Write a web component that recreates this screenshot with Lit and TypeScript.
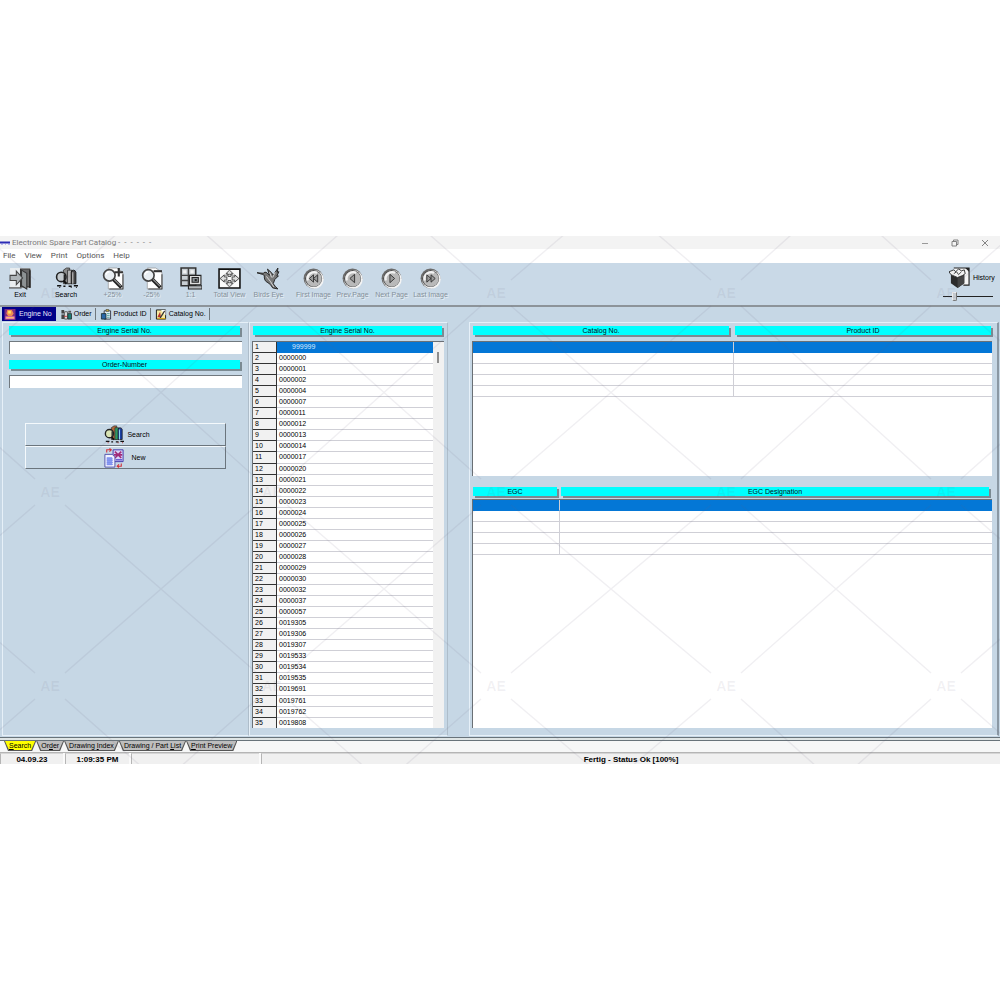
import { LitElement, html, svg, css, TemplateResult } from "lit";
import { customElement, state } from "lit/decorators.js";
import { classMap } from "lit/directives/class-map.js";

const icon = (box: string, cls: string, body: TemplateResult) =>
  html`<svg class=${cls} viewBox=${box} aria-hidden="true">${body}</svg>`;

const magnifier = svg`
  <circle cx="8" cy="8" r="5.5" fill="#e9eef2" stroke="#444" stroke-width="1.6"/>
  <path d="M5 7.5a3 3 0 0 1 3-3" fill="none" stroke="#fff" stroke-width="1.4"/>
  <path d="M12 12l7.5 7.5" stroke="#222" stroke-width="3.4"/>
  <path d="M12.5 11.8l6.5 6.4" stroke="#999" stroke-width="1"/>`;

const exitIcon = svg`
  <rect x="1" y="1" width="20" height="19" fill="#e9edf0"/>
  <path d="M11 2h9v17h-9z" fill="#666" stroke="#333"/>
  <path d="M12 3l5 3v15l-5-3z" fill="#8d9294" stroke="#333"/>
  <path d="M1 8h6V4l6 6.5L7 17v-4H1z" fill="#aeb4b8" stroke="#444"/>
  <path d="M0 20h12" stroke="#555" stroke-width="1.2"/>
  <path d="M20 3v17" stroke="#222" stroke-width="1.4"/>`;

const booksIcon = (color: boolean) => svg`
  <path d="M8 3l3-2h3v15H8z" fill=${color ? "#b0673a" : "#8b8b8b"} stroke="#333" stroke-width=".8"/>
  <path d="M12 3h4v13h-4z" fill=${color ? "#2f9a62" : "#b5b5b5"} stroke="#333" stroke-width=".8"/>
  <path d="M15.500 5q0-2 2-2t2.500 2v11h-4.500z" fill=${color ? "#1a3fa4" : "#444"} stroke="#111" stroke-width=".8"/>
  <path d="M17 5v11" stroke=${color ? "#8ed8f0" : "#bbb"} stroke-width="1.2"/>
  <circle cx="6" cy="9.500" r="4.500" fill=${color ? "#d9e4b4" : "#c3c9cd"} stroke="#222" stroke-width="1.5"/>
  <path d="M9 7v6" stroke="#222" stroke-width="1.500"/>
  <path d="M8 13l3 3" stroke="#111" stroke-width="2"/>
  <path d="M2 18h4M8 18.500h2M13 18.500h3M18 18h4" stroke="#111" stroke-width="1.400"/>
  <path d="M4 19.500h1M15 19.500h1M20 19.500h1" stroke=${color ? "#b02020" : "#333"} stroke-width="1.200"/>`;

const zoomIcon = (plus: boolean) => svg`
  <path d="M7 1h8l6 4v16H7z" fill="#fff" stroke="#888" stroke-width=".6"/>
  <path d="M21 7v14H8" fill="none" stroke="#444" stroke-width="1"/>
  ${magnifier}
  <path d=${plus ? "M13 5h8M17 1v8" : "M13 4h8"} stroke="#333" stroke-width="2"/>`;

const ratioIcon = svg`
  <path d="M2 1h14v17H2z" fill="#c9cfd3" stroke="#333" stroke-width="1.5"/>
  <path d="M9 1v17M2 8h14M2 13h14" stroke="#444" stroke-width="1.4"/>
  <path d="M4 3h3v3H4zM11 3h3v3h-3z" fill="#f2f2f2"/>
  <path d="M10 8h11v9H10z" fill="#ddd" stroke="#222"/>
  <path d="M12.500 10h6v4.500h-6z" fill="#8c9296" stroke="#222"/>
  <path d="M15 11.500h2v2h-2z" fill="#222"/>
  <path d="M9 18h13v3H9z" fill="#b5b9bc" stroke="#222"/>`;

const totalIcon = svg`
  <path d="M1 2h20v18H1z" fill="#fafafa" stroke="#111" stroke-width="1.5"/>
  <path d="M11 3l3.500 3.500h-2V9h-3V6.500h-2zM11 19l-3.500-3.500h2V13h3v2.500h2zM2 11l4-3.500v2h2.500v3H6v2zM20 11l-4-3.500v2h-2.500v3H16v2z" fill="#ddd" stroke="#444" stroke-width=".9"/>
  <path d="M7 8q4-2 8 0M7 14q4 2 8 0" fill="none" stroke="#555" stroke-width=".9"/>`;

const birdIcon = svg`
  <path d="M0 5.500L6 6q1.500-2 3.500-.500L12 8l-2-6 4 3.500L15.500 8 20 1l-.500 4 1.500-.500-2 4h1.500L17 12l-1.500 4 2 2.500L20 21l-5-1-2-3-2.500-2Q6.500 13.500 7 8L5 7z" fill="#777" stroke="#222" stroke-width=".9"/>
  <path d="M12 5l2 5M17.500 5L15 10M9 9l4 5M13 14l3 5" stroke="#ddd" stroke-width=".9"/>`;

const ball = (glyph: TemplateResult) => svg`
  <circle cx="11" cy="11" r="9.500" fill="#6c6c6c"/>
  <circle cx="11.800" cy="11.800" r="9" fill="#f4f4f4"/>
  <circle cx="11" cy="11" r="8.200" fill="#4c4c4c"/>
  <circle cx="11.300" cy="11.300" r="7.500" fill="#b9b9b9"/>
  <path d="M5.500 13a6.500 6.500 0 0 1 9-7.500" fill="none" stroke="#f2f2f2" stroke-width="2.200"/>
  <g fill="#9b9b9b" stroke="#333" stroke-width=".9">${glyph}</g>`;

const engineIcon = svg`
  <path d="M0 0h12v12H0z" fill="#7b2d82"/>
  <path d="M3 1h5l2 4-2 3H4L2 5z" fill="#f08c50"/>
  <path d="M4 2h3v3H4z" fill="#ffe15a"/>
  <path d="M1 8h10v3H1z" fill="#e87ab0"/><path d="M2 9.500h8" stroke="#ffd84a"/>`;
const orderIcon = svg`
  <path d="M1 1h3v4H1zM1 6h3v5H1z" fill="#444"/>
  <path d="M4.500 3h3v8h-3z" fill="#eee" stroke="#333" stroke-width=".8"/>
  <path d="M8 5h4v6H8z" fill="#1c7c74" stroke="#222" stroke-width=".8"/>
  <path d="M8.500 2h3v2h-3z" fill="#555"/><path d="M4 8h3" stroke="#c33"/>`;
const productIcon = svg`
  <path d="M4 2h7v9H4z" fill="#e3eef2" stroke="#223" stroke-width=".9"/>
  <path d="M6 .500h3v2H6z" fill="#d8b640" stroke="#333" stroke-width=".6"/>
  <path d="M1 5h5v6H1z" fill="#2a67a8" stroke="#122" stroke-width=".8"/>
  <path d="M7 5h3M7 7h3M7 9h3" stroke="#2c8a8a" stroke-width=".8"/>`;
const catalogIcon = svg`
  <path d="M1 1h10v10H1z" fill="#f6e9a2" stroke="#111" stroke-width="1"/>
  <path d="M6 1h5v6z" fill="#fff"/><path d="M2 9l3-6 1 6" fill="#b8352c"/>
  <path d="M10 2L5 10" stroke="#333" stroke-width="1.300"/><path d="M2 10.500h9" stroke="#d6a51d" stroke-width="1.200"/>`;

const newIcon = svg`
  <path d="M10 2h11v13H10z" fill="#d9d4f8" stroke="#3a2fa8"/>
  <path d="M12 4l7 7M19 4l-7 7M11 7.500h9" stroke="#a02a78" stroke-width="1.800"/>
  <path d="M13 13h7" stroke="#5b4fd0" stroke-width="1.500"/>
  <path d="M1 7h8l3 3v11H1z" fill="#f4f5ff" stroke="#4a4aa6"/>
  <path d="M3 10h6v9H3z" fill="#8fa0f4"/><path d="M3 12h7M3 14h7M3 16h7M3 18h7" stroke="#7585ea" stroke-width=".8"/>
  <path d="M3 5V2h4M6 .500L8 2 6 4M19 17v3h-4M16.500 18l-2 2 2 1.500" fill="none" stroke="#d2333b" stroke-width="1.200"/>`;

const historyIcon = svg`
  <path d="M5 1h16v18h-6" fill="#f6f6f6" stroke="#222" stroke-width="1.200"/>
  <path d="M17 1h4v4z" fill="#222"/>
  <path d="M2 8l7 3 7-3v9l-7 5-7-5z" fill="#2c2c2c"/>
  <path d="M9 11v11l7-5V8z" fill="#444"/>
  <path d="M2 8L0 5l5-2 2 2 3-3 3 2 3-1 1 4-3 2-5 2z" fill="#f2f2f2" stroke="#222" stroke-width=".9"/>
  <path d="M5 7l3-2 2 3 3-3" fill="none" stroke="#444"/>`;

interface Tool { label: string; art: TemplateResult; off: boolean; cls: string }
const TOOLS: Tool[] = [
  { label: "Exit", art: exitIcon, off: false, cls: "exit" },
  { label: "Search", art: booksIcon(false), off: false, cls: "find" },
  { label: "+25%", art: zoomIcon(true), off: true, cls: "" },
  { label: "-25%", art: zoomIcon(false), off: true, cls: "" },
  { label: "1:1", art: ratioIcon, off: true, cls: "" },
  { label: "Total View", art: totalIcon, off: true, cls: "" },
  { label: "Birds Eye", art: birdIcon, off: true, cls: "" },
  { label: "First Image", art: ball(svg`<path d="M11 7.500v7L7 11zM15 7.500v7L11 11z"/>`), off: true, cls: "nav" },
  { label: "Prev.Page", art: ball(svg`<path d="M13 7v8l-4.500-4z"/>`), off: true, cls: "" },
  { label: "Next Page", art: ball(svg`<path d="M9.500 7v8l4.500-4z"/>`), off: true, cls: "" },
  { label: "Last Image", art: ball(svg`<path d="M7.500 7.500v7l4-3.500zM11.500 7.500v7l4-3.500z"/>`), off: true, cls: "" },
];

const SERIALS = (
  "999999 0000000 0000001 0000002 0000004 0000007 0000011 0000012 0000013 0000014 0000017 0000020 " +
  "0000021 0000022 0000023 0000024 0000025 0000026 0000027 0000028 0000029 0000030 0000032 0000037 " +
  "0000057 0019305 0019306 0019307 0019533 0019534 0019535 0019691 0019761 0019762 0019808"
).split(" ");

const VIEWS = [
  { label: "Engine No", art: engineIcon },
  { label: "Order", art: orderIcon },
  { label: "Product ID", art: productIcon },
  { label: "Catalog No.", art: catalogIcon },
];

const SHEETS: [string, string, string][] = [
  ["", "S", "earch"],
  ["Or", "d", "er"],
  ["Drawing ", "I", "ndex"],
  ["Drawing / Part ", "L", "ist"],
  ["", "P", "rint Preview"],
];

const MARK_X = [50, 272, 496, 726, 946];
const MARK_Y = [57, 256, 450];

@customElement("app-root")
export class AppRoot extends LitElement {
  @state() private view = 0;
  @state() private sheet = 0;
  @state() private row = 0;

  static styles = css`
    :host {
      display: flex;
      flex-direction: column;
      justify-content: center;
      min-height: 100vh;
      background: #fff;
      color: #000;
      font: 7px/10px "Liberation Sans", sans-serif;
    }
    * { box-sizing: border-box; }
    button, input { font: inherit; color: inherit; margin: 0; padding: 0; border: 0; background: none; border-radius: 0; }
    svg { display: block; flex: none; }
    .window { position: relative; overflow: hidden; background: #c6d7e5; }
    .title {
      display: flex; align-items: center; height: 13px; background: #f3f3f3;
      font: 8px/10px Roboto, sans-serif; color: #7c7c7c;
    }
    .logo { width: 12px; height: 6px; }
    .name { flex: 1; }
    .win { width: 30px; height: 13px; display: grid; place-items: center; }
    .win svg { width: 8px; height: 8px; }
    .menu {
      display: flex; align-items: center; gap: 9px; height: 14px; padding-left: 3px; background: #fff;
      font: 8px/10px Roboto, sans-serif; color: #555;
    }
    .toolbar {
      display: flex; align-items: flex-start; height: 44px; padding-top: 4px;
      border-bottom: 2px solid #8d949a; background: #c9d9e7;
    }
    .tool { width: 39px; display: flex; flex-direction: column; align-items: center; white-space: nowrap; }
    .tool svg { width: 23px; height: 23px; }
    .tool:disabled { color: #84909a; text-shadow: 1px 1px 0 #e6eef4; }
    .exit { width: 40px; }
    .find { width: 46px; margin: 0 4px 0 3px; }
    .nav { margin-left: 6px; }
    .history { margin-left: auto; width: 58px; }
    .history label { display: flex; align-items: center; gap: 3px; padding-left: 7px; }
    .history svg { width: 21px; height: 21px; }
    .slider { appearance: none; display: block; width: 50px; height: 12px; margin: 2px 0 0 1px; }
    .slider::-webkit-slider-runnable-track { height: 1px; background: #222; }
    .slider::-webkit-slider-thumb {
      appearance: none; width: 5px; height: 9px; margin-top: -4px; background: #c8ccd0;
      border: 1px solid #777; border-top-color: #eee; border-left-color: #eee; border-radius: 0 0 2px 2px;
    }
    .views { display: flex; height: 14px; padding-left: 2px; }
    .view {
      display: flex; align-items: center; gap: 2px; padding: 0 3px 0 2px; white-space: nowrap;
      border-right: 1px solid #6f777d; margin: 1px 2px 1px 0;
    }
    .view svg { width: 12px; height: 11px; }
    .view.on { background: #000088; color: #e8e8ff; border-color: #000088; margin: 0 2px 0 0; gap: 3px; }
    .work { display: grid; grid-template-columns: 247px 199px minmax(0, 1fr); padding: 1px 1px 1px 2px; }
    .panel {
      display: flex; flex-direction: column; padding: 3px 6px 7px; border: 1px solid #e6f0f8;
      border-right-color: #aebdca;
    }
    .bar {
      height: 9px; line-height: 10px; text-align: center; background: #00ffff; color: #012;
      box-shadow: 2px 2px 0 #7b8a92; margin-bottom: 6px;
    }
    .field { display: block; margin-bottom: 6px; }
    .field .bar { display: block; margin-right: 2px; }
    .field input {
      display: block; width: 100%; height: 13px; background: #fff; padding: 0 2px;
      border-top: 1px solid #71797f; border-left: 1px solid #71797f;
    }
    .actions { display: flex; flex-direction: column; margin: 29px 16px 0; }
    .act {
      display: flex; justify-content: center; align-items: center; gap: 2px; height: 23px; padding-left: 2px;
      border: 1px solid; border-color: #f4f9fc #6b757d #6b757d #f4f9fc;
    }
    .act svg { width: 22px; height: 20px; }
    .act span { width: 24px; text-align: center; }
    .listing { padding: 3px 3px 7px 2px; }
    .listing .bar { margin: 0 2px 6px 1px; }
    .list { display: flex; height: 387px; overflow: hidden; border-top: 1px solid #6a7075; border-left: 1px solid #6a7075; background: #fff; }
    .scroll { flex: none; width: 11px; background: #f1f1f1; padding: 10px 0 0 4px; }
    .thumb { width: 2px; height: 11px; background: #8d8d8d; }
    table { border-collapse: separate; border-spacing: 0; table-layout: fixed; width: 100%; }
    td, th { padding: 0; height: 11px; line-height: 10px; font-weight: normal; text-align: left; overflow: hidden; white-space: nowrap; }
    td { border-bottom: 1px solid #cfcfd6; }
    .serials { flex: 1; height: 387px; }
    .serials th { width: 24px; padding-left: 2px; background: #f1f1f1; border-bottom: 1px solid #333; border-right: 1px solid #333; }
    .serials td { padding-left: 2px; }
    .serials .first td { padding-left: 15px; }
    .sel td { background: #0477d6; border-bottom-color: #0477d6; color: #d8ecff; }
    .results { margin-left: 21px; padding: 3px 5px 7px 2px; border-right: 2px solid #8a98a4; }
    .heads { display: grid; gap: 6px; padding: 0 1px; }
    .wide { grid-template-columns: 1fr 1fr; }
    .egc { grid-template-columns: 84px 1fr; gap: 4px; padding-right: 3px; }
    .egc .bar { margin-bottom: 3px; }
    .box { min-height: 135px; background: #fff; border-top: 1px solid #6a7075; border-left: 1px solid #6a7075; }
    .box td + td { border-left: 1px solid #cfcfd6; }
    .box .narrow { width: 86px; }
    .lower { flex: 1; }
    .egc { margin-top: 11px; }
    .foot { height: 4px; background: #dfe5e5; border-top: 1px solid #68737a; border-bottom: 1px solid #68737a; }
    .sheets { display: flex; height: 12px; padding-left: 4px; background: #f6f7f7; border-bottom: 1px solid #b5b5b5; }
    .sheet {
      position: relative; height: 10px; line-height: 10px; padding: 0 5px; white-space: nowrap;
      background: #555; clip-path: polygon(0 0, 100% 0, calc(100% - 4px) 100%, 4px 100%);
    }
    .sheet::before {
      content: ""; position: absolute; inset: 0 1px 1px;
      background: #bdbdbd; clip-path: polygon(0 0, 100% 0, calc(100% - 4px) 100%, 4px 100%);
    }
    .sheet.on::before { background: #ffff00; }
    .sheet span { position: relative; }
    .status {
      display: grid; grid-template-columns: 63px 64px 128px 1fr; gap: 2px; height: 11px; overflow: hidden;
      background: #fafafa; font: bold 8px/12px "Liberation Sans", sans-serif; text-align: center;
    }
    .status span { background: #f0f0f0; border-left: 1px solid #b5b5b5; border-top: 1px solid #d5d5d5; height: 11px; line-height: 11px; }
    .marks { position: absolute; inset: 0; width: 100%; height: 100%; pointer-events: none; }
  `;

  private marks() {
    const lines: TemplateResult[] = [];
    const xs = [-174, ...MARK_X, 1170];
    const ys = [-140, ...MARK_Y, 646];
    for (let j = 0; j < ys.length - 1; j++) {
      for (let i = 0; i < xs.length - 1; i++) {
        const [l, r, t, b] = [xs[i] + 15, xs[i + 1] - 15, ys[j] + 13, ys[j + 1] - 13];
        lines.push(svg`<path d="M${l} ${t}L${r} ${b}M${r} ${t}L${l} ${b}"/>`);
      }
    }
    return html`<svg class="marks" viewBox="0 0 1000 528" preserveAspectRatio="none" aria-hidden="true">
      <g fill="none" stroke="#6e6482" stroke-opacity=".1" stroke-width="1.400">${lines}</g>
      <g fill="#6e6482" fill-opacity=".09" font-family="Liberation Sans" font-weight="bold" font-size="14" text-anchor="middle">
        ${MARK_Y.map((y, j) =>
          MARK_X.filter((_, i) => j > 0 || i !== 1).map((x) => svg`<text x=${x} y=${y + 5}>AE</text>`)
        )}
      </g>
    </svg>`;
  }

  private grid(label: string, first: string) {
    return html`<table aria-label=${label}>
      <tbody>
        ${[0, 1, 2, 3, 4].map((n) => html`<tr class=${n ? "" : "sel"}><td class=${first}></td><td></td></tr>`)}
      </tbody>
    </table>`;
  }

  render() {
    return html`
      <main class="window">
        <header class="title">
          ${icon("0 0 12 6", "logo", svg`<path d="M0 2.500h10" stroke="#2b2bb4" stroke-width="2"/><path d="M1 4h2M5 4h1M8 4h2" stroke="#7d7de0"/>`)}
          <span class="name">Electronic Spare Part Catalog - &nbsp;- &nbsp;- &nbsp;- &nbsp;- &nbsp;-</span>
          <button class="win" aria-label="Minimize">${icon("0 0 8 8", "", svg`<path d="M1 4.500h6" stroke="#999"/>`)}</button>
          <button class="win" aria-label="Restore">${icon("0 0 8 8", "", svg`<path d="M1 2.500h4.500V7H1zM2.500 2.500V1H7v4.500H5.500" fill="none" stroke="#777" stroke-width=".9"/>`)}</button>
          <button class="win" aria-label="Close">${icon("0 0 8 8", "", svg`<path d="M1 1l6 6M7 1L1 7" stroke="#777" stroke-width=".9"/>`)}</button>
        </header>
        <nav class="menu">
          ${["File", "View", "Print", "Options", "Help"].map((m) => html`<button>${m}</button>`)}
        </nav>
        <div class="toolbar">
          ${TOOLS.map((t) => html`<button class="tool ${t.cls}" ?disabled=${t.off}>${icon("0 0 22 22", "", t.art)}<span>${t.label}</span></button>`)}
          <div class="history">
            <label for="history">${icon("0 0 22 22", "", historyIcon)}History</label>
            <input id="history" class="slider" type="range" min="0" max="10" value="2" />
          </div>
        </div>
        <nav class="views">
          ${VIEWS.map((v, i) => html`<button class=${classMap({ view: true, on: i === this.view })} @click=${() => (this.view = i)}>${icon("0 0 12 12", "", v.art)}${v.label}</button>`)}
        </nav>
        <div class="work">
          <section class="panel">
            <label class="field"><span class="bar">Engine Serial No.</span><input type="text" /></label>
            <label class="field"><span class="bar">Order-Number</span><input type="text" /></label>
            <div class="actions">
              <button class="act">${icon("0 0 22 22", "", booksIcon(true))}<span>Search</span></button>
              <button class="act">${icon("0 0 22 22", "", newIcon)}<span>New</span></button>
            </div>
          </section>
          <section class="panel listing">
            <div class="bar">Engine Serial No.</div>
            <div class="list">
              <table class="serials" aria-label="Engine Serial No.">
                <tbody>
                  ${SERIALS.map((s, i) => html`<tr class=${classMap({ sel: i === this.row, first: i === 0 })} @click=${() => (this.row = i)}>
                    <th scope="row">${i + 1}</th><td>${s}</td>
                  </tr>`)}
                </tbody>
              </table>
              <div class="scroll"><div class="thumb"></div></div>
            </div>
          </section>
          <section class="panel results">
            <div class="heads wide"><div class="bar">Catalog No.</div><div class="bar">Product ID</div></div>
            <div class="box">${this.grid("Catalogs", "")}</div>
            <div class="heads egc"><div class="bar">EGC</div><div class="bar">EGC Designation</div></div>
            <div class="box lower">${this.grid("Engine groups", "narrow")}</div>
          </section>
        </div>
        <div class="foot"></div>
        <nav class="sheets">
          ${SHEETS.map(([a, k, b], i) => html`<button class=${classMap({ sheet: true, on: i === this.sheet })} @click=${() => (this.sheet = i)}><span>${a}<u>${k}</u>${b}</span></button>`)}
        </nav>
        <footer class="status"><span>04.09.23</span><span>1:09:35 PM</span><span></span><span>Fertig - Status Ok [100%]</span></footer>
        ${this.marks()}
      </main>
    `;
  }
}
